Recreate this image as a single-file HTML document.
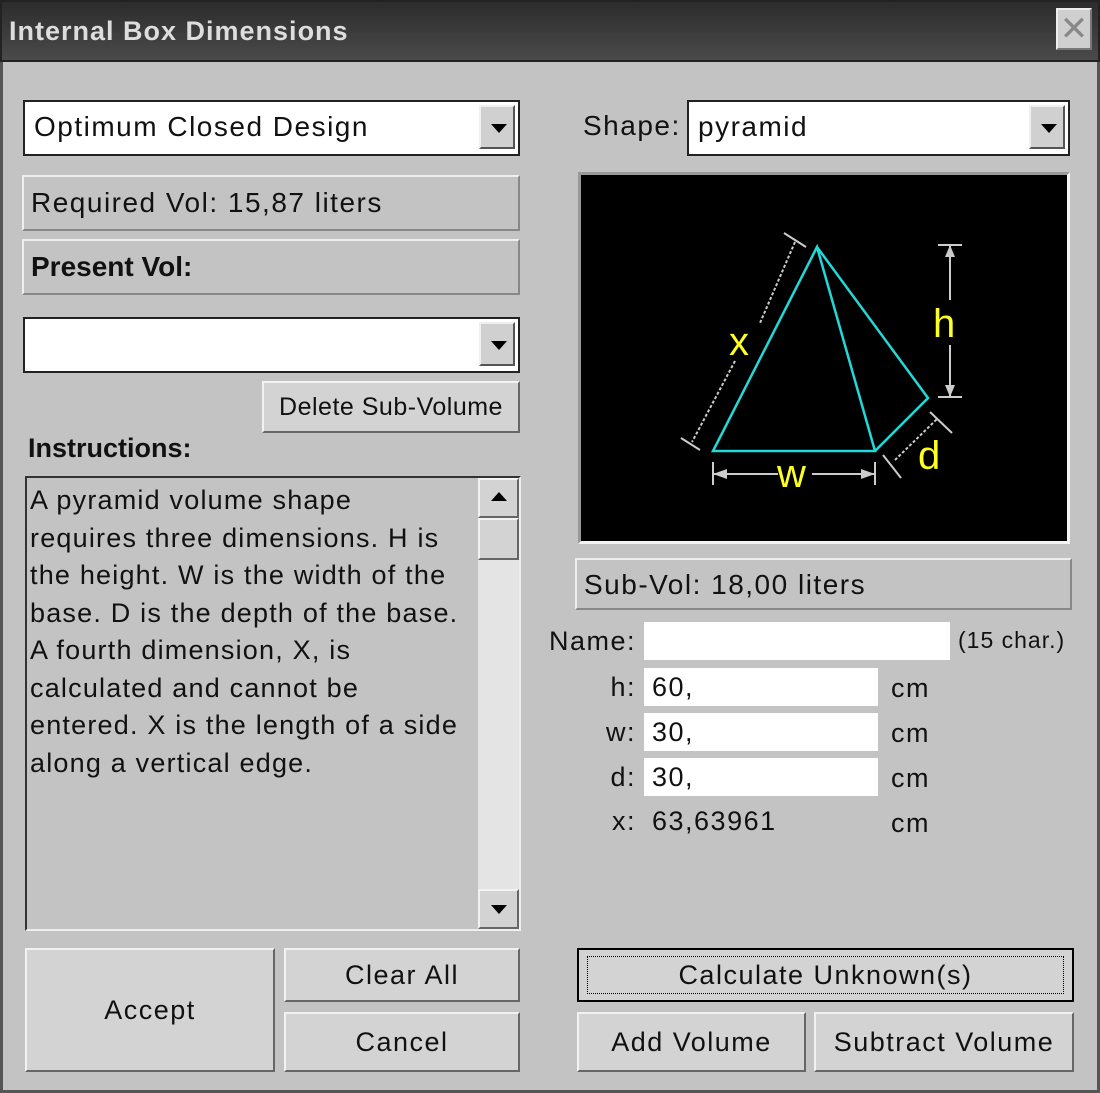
<!DOCTYPE html>
<html><head><style>
*{box-sizing:border-box;margin:0;padding:0}
body{width:1100px;height:1093px;background:#c3c3c3;font-family:"Liberation Sans",sans-serif;position:relative;overflow:hidden;color:#111;letter-spacing:1.5px}
.a{position:absolute}
.title{left:0;top:0;width:1100px;height:62px;background:linear-gradient(#2c2c2c,#4a4a4a);border:2px solid #222}
.title span{position:absolute;left:7px;top:14px;font-size:27px;font-weight:bold;color:#ddd;letter-spacing:1px}
.close{right:8px;top:8px;width:36px;height:42px;background:#cfcfcf;border:2px solid #eee;border-right-color:#777;border-bottom-color:#777;color:#888;font-size:34px;text-align:center;line-height:38px;letter-spacing:0}
.frame{left:0;top:62px;width:1100px;height:1031px;border:3px solid #555;border-top:none}
.combo{background:#fff;border:2px solid #222;font-size:28px;padding-left:9px;line-height:50px}
.dd{position:absolute;right:3px;top:3px;width:36px;height:44px;background:#d0d0d0;border:2px solid #f0f0f0;border-right-color:#555;border-bottom-color:#555}
.dd:after{content:"";position:absolute;left:10px;top:17px;border:8px solid transparent;border-top:9px solid #000}
.panel{background:#c3c3c3;border:2px solid #eee;border-right-color:#888;border-bottom-color:#888;font-size:28px;padding-left:7px;line-height:52px}
.btn{background:#d3d3d3;border:2px solid #f2f2f2;border-right-color:#666;border-bottom-color:#666;font-size:27px;text-align:center}
.inp{background:#fff;font-size:27px;padding-left:8px;line-height:38px;height:38px}
.lbl{font-size:27px;text-align:right}
</style></head><body>
<div class="a title"><span>Internal Box Dimensions</span></div>
<div class="a close">✕</div>
<div class="a frame"></div>

<div class="a combo" style="left:23px;top:100px;width:497px;height:56px">Optimum Closed Design<div class="dd"></div></div>
<div class="a panel" style="left:22px;top:175px;width:498px;height:56px">Required Vol: 15,87 liters</div>
<div class="a panel" style="left:22px;top:239px;width:498px;height:56px;font-weight:bold;letter-spacing:0">Present Vol:</div>
<div class="a combo" style="left:23px;top:317px;width:497px;height:56px"><div class="dd"></div></div>
<div class="a btn" style="left:262px;top:381px;width:258px;height:52px;line-height:48px;font-size:25px;letter-spacing:0.5px">Delete Sub-Volume</div>
<div class="a" style="left:28px;top:433px;font-size:27px;font-weight:bold;letter-spacing:0">Instructions:</div>
<div class="a" style="left:25px;top:476px;width:496px;height:455px;border:2px solid #333;border-right-color:#eee;border-bottom-color:#eee;background:#c3c3c3">
<div style="padding:4px 0 0 3px;width:450px;font-size:27px;line-height:37.5px;white-space:nowrap;letter-spacing:1.2px">A pyramid volume shape<br>requires three dimensions. H is<br>the height. W is the width of the<br>base. D is the depth of the base.<br>A fourth dimension, X, is<br>calculated and cannot be<br>entered. X is the length of a side<br>along a vertical edge.</div>
<div class="a" style="left:451px;top:0;width:41px;height:451px;background:#e4e4e4"></div>
<div class="a btn" style="left:451px;top:0;width:41px;height:40px"><div style="position:absolute;left:11px;top:12px;border:8px solid transparent;border-bottom:9px solid #000;border-top:none"></div></div>
<div class="a btn" style="left:451px;top:40px;width:41px;height:42px"></div>
<div class="a btn" style="left:451px;top:411px;width:41px;height:40px"><div style="position:absolute;left:11px;top:14px;border:8px solid transparent;border-top:9px solid #000;border-bottom:none"></div></div>
</div>

<div class="a btn" style="left:25px;top:948px;width:250px;height:124px;line-height:120px">Accept</div>
<div class="a btn" style="left:284px;top:948px;width:236px;height:54px;line-height:50px">Clear All</div>
<div class="a btn" style="left:284px;top:1012px;width:236px;height:60px;line-height:56px">Cancel</div>

<div class="a" style="left:583px;top:110px;font-size:28px">Shape:</div>
<div class="a combo" style="left:687px;top:100px;width:383px;height:56px">pyramid<div class="dd"></div></div>

<div class="a" style="left:578px;top:172px;width:492px;height:372px;background:#000;border:3px solid #999;border-right-color:#f4f4f4;border-bottom-color:#f4f4f4">
<svg width="486" height="366" style="position:absolute;left:0;top:0" viewBox="581 175 486 366">
<g fill="none" stroke="#22d8d8" stroke-width="2.5">
<path d="M817 247 L713 451 L875 451 Z M817 247 L928 398 L875 451"/>
</g>
<g stroke="#ccc" stroke-width="2" fill="none">
<path d="M795 242 L760 323 M735 361 L692 442" stroke-dasharray="3 2"/>
<path d="M784 233 L806 247 M681 438 L700 450"/>
<path d="M938 245 L962 245 M950 245 L950 300 M950 345 L950 397 M938 397 L962 397"/>
<path d="M713 462 L713 485 M875 462 L875 485 M713 474 L778 474 M812 474 L875 474"/>
<path d="M895 460 L937 419" stroke-dasharray="3 2"/>
<path d="M883 455 L901 478 M930 412 L952 433"/>
</g>
<g fill="#ccc"><path d="M713 474 L727 469 L727 479Z M875 474 L861 469 L861 479Z M950 245 L945 257 L955 257Z M950 397 L945 385 L955 385Z"/></g>
<g fill="#ffff22" font-family="Liberation Sans" font-size="40">
<text x="729" y="355">x</text><text x="933" y="337">h</text><text x="777" y="487">w</text><text x="918" y="469">d</text>
</g>
</svg></div>

<div class="a panel" style="left:575px;top:558px;width:497px;height:52px;line-height:50px">Sub-Vol: 18,00 liters</div>
<div class="a lbl" style="left:530px;top:626px;width:106px">Name:</div>
<div class="a inp" style="left:644px;top:622px;width:306px"></div>
<div class="a" style="left:958px;top:627px;font-size:23px;letter-spacing:1px">(15 char.)</div>
<div class="a lbl" style="left:580px;top:672px;width:56px">h:</div>
<div class="a inp" style="left:644px;top:668px;width:234px">60,</div>
<div class="a" style="left:891px;top:673px;font-size:27px">cm</div>
<div class="a lbl" style="left:580px;top:717px;width:56px">w:</div>
<div class="a inp" style="left:644px;top:713px;width:234px">30,</div>
<div class="a" style="left:891px;top:718px;font-size:27px">cm</div>
<div class="a lbl" style="left:580px;top:762px;width:56px">d:</div>
<div class="a inp" style="left:644px;top:758px;width:234px">30,</div>
<div class="a" style="left:891px;top:763px;font-size:27px">cm</div>
<div class="a lbl" style="left:580px;top:806px;width:56px">x:</div>
<div class="a" style="left:652px;top:806px;font-size:27px">63,63961</div>
<div class="a" style="left:891px;top:808px;font-size:27px">cm</div>

<div class="a" style="left:577px;top:948px;width:497px;height:54px;border:2px solid #000;background:#d3d3d3"><div style="position:absolute;left:8px;top:6px;right:8px;bottom:6px;border:1px dotted #000;text-align:center;font-size:27px;line-height:36px">Calculate Unknown(s)</div></div>
<div class="a btn" style="left:577px;top:1012px;width:229px;height:60px;line-height:56px">Add Volume</div>
<div class="a btn" style="left:814px;top:1012px;width:260px;height:60px;line-height:56px">Subtract Volume</div>
</body></html>
